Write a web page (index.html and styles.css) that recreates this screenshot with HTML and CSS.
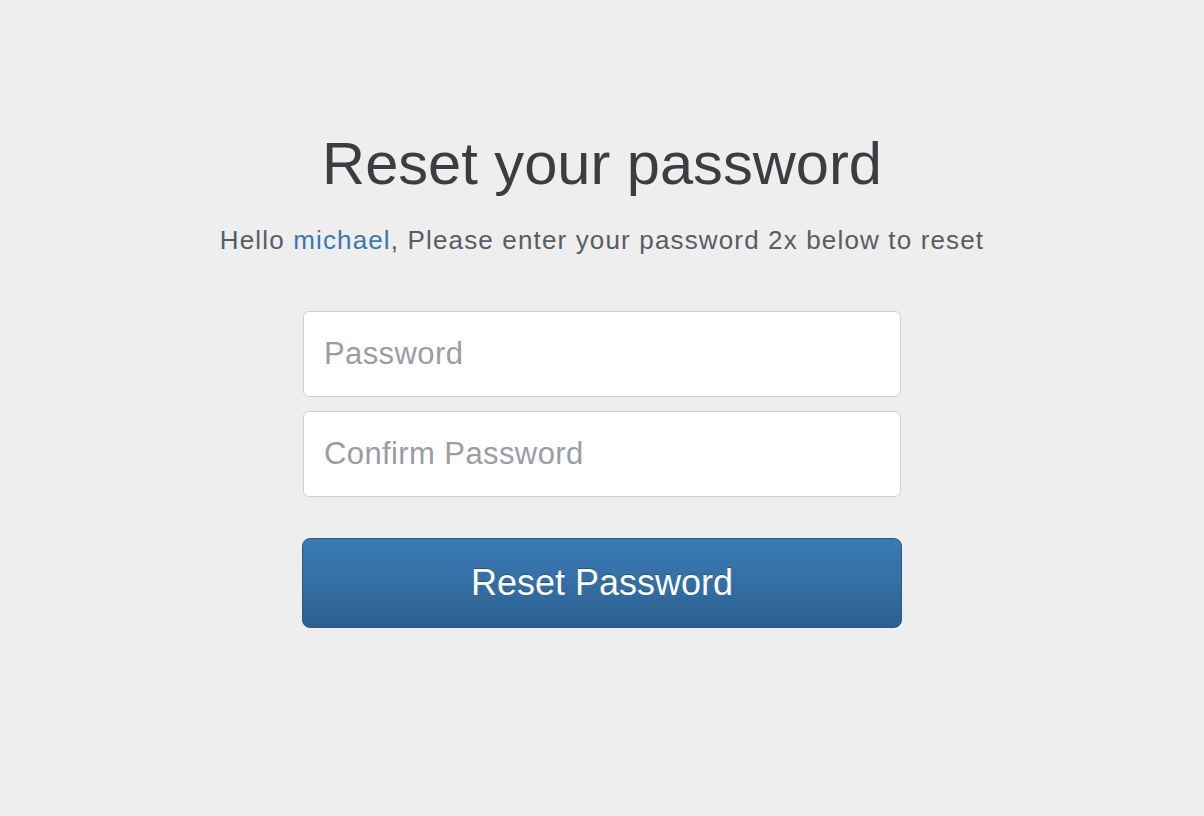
FILE: index.html
```html
<!DOCTYPE html>
<html>
<head>
<meta charset="utf-8">
<title>Reset your password</title>
<link rel="stylesheet" href="styles.css">
</head>
<body>
<main class="page">
  <h1 class="title">Reset your password</h1>
  <p class="lead">Hello <a class="user" href="#">michael</a>, Please enter your password 2x below to reset</p>
  <form class="form">
    <input class="field" type="password" placeholder="Password">
    <input class="field" type="password" placeholder="Confirm Password">
    <button class="btn" type="button">Reset Password</button>
  </form>
</main>
</body>
</html>
```
FILE: styles.css
```css
html, body {
  margin: 0;
  padding: 0;
  background: #eeeeee;
  font-family: "Liberation Sans", Arial, sans-serif;
}
.page {
  display: flex;
  flex-direction: column;
  align-items: center;
  padding-top: 131px;
}
.title {
  margin: 0;
  font-size: 59.6px;
  line-height: 66px;
  font-weight: normal;
  color: #3a3d42;
  text-align: center;
}
.lead {
  margin: 26px 0 0;
  font-size: 26px;
  line-height: 34px;
  letter-spacing: 1.15px;
  color: #575c66;
  text-align: center;
}
.user {
  color: #3a78b0;
  text-decoration: none;
}
.form {
  margin-top: 54px;
  width: 600px;
  display: flex;
  flex-direction: column;
  align-items: center;
}
.field {
  box-sizing: border-box;
  width: 598px;
  height: 86px;
  margin: 0 0 14px;
  padding: 0 20px;
  border: 1px solid #cdcfd3;
  border-radius: 6px;
  background: #ffffff;
  font-family: "Liberation Sans", Arial, sans-serif;
  font-size: 31px;
  letter-spacing: 0.4px;
  color: #333;
  outline: none;
}
.field::placeholder {
  color: #9a9da4;
}
.btn {
  box-sizing: border-box;
  width: 600px;
  height: 90px;
  margin-top: 27px;
  border: 1px solid #2b5a86;
  border-radius: 8px;
  background: linear-gradient(to bottom, #3a79b2 0%, #3470a6 45%, #2c5f8f 100%);
  color: #ffffff;
  font-family: "Liberation Sans", Arial, sans-serif;
  font-size: 36px;
  text-shadow: 0 -1px 0 rgba(0,0,0,0.25);
  cursor: pointer;
}
```
